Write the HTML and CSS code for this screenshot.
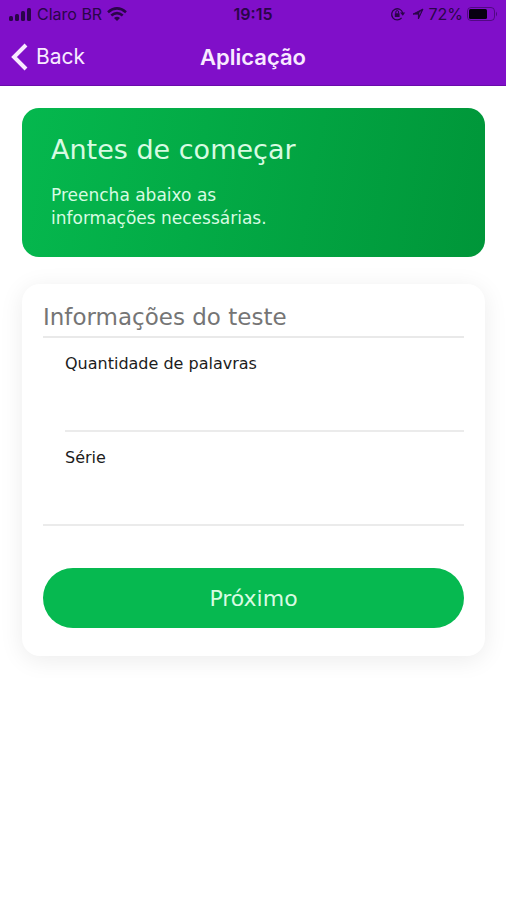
FILE: index.html
```html
<!DOCTYPE html>
<html lang="pt-BR">
<head>
<meta charset="utf-8">
<meta name="viewport" content="width=device-width, initial-scale=1">
<title>Aplicação</title>
<link rel="stylesheet" href="styles.css">
</head>
<body>
<header class="header">
  <div class="status">
    <div class="status-group">
      <svg width="24" height="14" viewBox="0 0 24 14" aria-hidden="true">
        <rect x="1" y="9" width="4" height="5" rx="1.500"/><rect x="7" y="7" width="4" height="7" rx="1.500"/><rect x="13" y="4" width="4" height="10" rx="1.500"/><rect x="19" y="1" width="4" height="13" rx="1.500"/>
      </svg>
      <span>Claro BR</span>
      <svg width="20" height="14" viewBox="0 0 20 14" aria-hidden="true">
        <g fill="none" stroke="currentColor" stroke-width="2.6"><path d="M1 5.2Q10-2.4 19 5.2"/><path d="M4.3 8.6Q10 3.6 15.7 8.6"/></g>
        <path d="M7 10.9Q10 8.6 13 10.9L10 14Z"/>
      </svg>
    </div>
    <span class="clock">19:15</span>
    <div class="status-group status-end">
      <svg width="18" height="14" viewBox="0 0 18 14" aria-hidden="true">
        <path d="M11.6 10.9A5.6 5.6 0 1 1 12.7 6" fill="none" stroke="currentColor" stroke-width="1.3"/><path d="M10 5.4h5.2l-2.4 3.4z"/>
        <rect x="4.8" y="6.2" width="4.8" height="3.8" rx=".5"/><path d="M5.8 6.5V5a1.4 1.4 0 0 1 2.8 0v1.5" fill="none" stroke="currentColor"/>
      </svg>
      <svg width="12" height="12" viewBox="0 0 12 12" aria-hidden="true"><path d="M1 6.1 11 1 6.4 11V6.1Z" stroke="currentColor" stroke-width="1" stroke-linejoin="round"/><path d="M7.3 4.8 9.3 2.8 7.3 7.4Z" class="arrow-gap"/></svg>
      <span>72%</span>
      <svg width="31" height="16" viewBox="0 0 31 16" aria-hidden="true">
        <rect x=".5" y="1.500" width="27" height="13" rx="3.500" fill="none" stroke="currentColor" opacity=".55"/><rect x="2" y="3" width="18" height="10" rx="1.500" class="charge"/><path d="M29 5.500q2 2.500 0 5z" opacity=".6"/>
      </svg>
    </div>
  </div>
  <nav class="nav">
    <a class="back" href="#">
      <svg width="18" height="28" viewBox="0 0 18 28" aria-hidden="true"><path d="M16 2 4 14l12 12" fill="none" stroke="currentColor" stroke-width="4"/></svg>
      <span>Back</span>
    </a>
    <h1 class="title">Aplicação</h1>
  </nav>
</header>
<main class="content">
  <section class="banner">
    <h2 class="banner-title">Antes de começar</h2>
    <p class="banner-text">Preencha abaixo as<br>informações necessárias.</p>
  </section>
  <form class="card">
    <h2 class="card-title">Informações do teste</h2>
    <div class="field">
      <label for="words">Quantidade de palavras</label>
      <input id="words" type="text" inputmode="numeric">
    </div>
    <div class="field field-last">
      <label for="grade">Série</label>
      <input id="grade" type="text">
    </div>
    <button class="next" type="button">Próximo</button>
  </form>
</main>
</body>
</html>
```
FILE: styles.css
```css
* {
  box-sizing: border-box;
}

body {
  margin: 0;
  background: #fff;
  font-family: Verdana, "DejaVu Sans", sans-serif;
}

h1, h2, p {
  margin: 0;
  font-weight: 400;
}

svg {
  display: block;
  flex: none;
  fill: currentColor;
}

.header {
  background: #800fc9;
  border-bottom: 1px solid #6a0cab;
  font-family: Inter, sans-serif;
}

.status {
  display: grid;
  grid-template-columns: 1fr auto 1fr;
  align-items: center;
  height: 28px;
  padding: 0 8px;
  color: #2a0549;
  font-size: 16px;
}

.status-group {
  display: flex;
  align-items: center;
  gap: 5px;
}

.status-end {
  justify-content: flex-end;
  gap: 4px;
}

.clock {
  font-weight: 600;
}

.arrow-gap {
  fill: #800fc9;
}

.charge {
  fill: #080010;
}

.nav {
  display: grid;
  grid-template-columns: 1fr auto 1fr;
  align-items: center;
  height: 57px;
  padding: 0 10px;
  color: #f8eaff;
}

.back {
  display: flex;
  align-items: center;
  gap: 8px;
  color: inherit;
  font-size: 21px;
  text-decoration: none;
}

.title {
  font-size: 22px;
  font-weight: 600;
}

.content {
  display: flex;
  flex-direction: column;
  gap: 27px;
  padding: 22px 21px 22px 22px;
}

.banner {
  padding: 25px 29px 27px;
  border-radius: 17px;
  background: linear-gradient(100deg, #05b84e, #009639);
  color: #d8fbe2;
}

.banner-title {
  font-size: 27px;
  line-height: 34px;
}

.banner-text {
  margin-top: 17px;
  font-size: 17px;
  line-height: 23px;
}

.card {
  padding: 16px 21px 28px;
  border-radius: 18px;
  background: #fff;
  box-shadow: 0 4px 24px rgba(0, 0, 0, 0.08);
}

.card-title {
  padding-bottom: 2px;
  border-bottom: 2px solid #e9e9e9;
  color: #757575;
  font-size: 23px;
  line-height: 34px;
}

.field {
  display: flex;
  flex-direction: column;
  margin-left: 22px;
  padding-top: 15px;
  border-bottom: 2px solid #ebebeb;
  color: #1c1c1c;
  font-size: 16px;
  line-height: 22px;
}

.field-last {
  margin-left: 0;
  padding-left: 22px;
}

.field input {
  width: 100%;
  height: 55px;
  padding: 0;
  border: 0;
  outline: 0;
  background: transparent;
  color: inherit;
  font: inherit;
}

.next {
  display: block;
  width: 100%;
  height: 60px;
  margin-top: 42px;
  border: 0;
  border-radius: 30px;
  background: #06b950;
  color: #d8fbe2;
  font: inherit;
  font-size: 22px;
}
```
